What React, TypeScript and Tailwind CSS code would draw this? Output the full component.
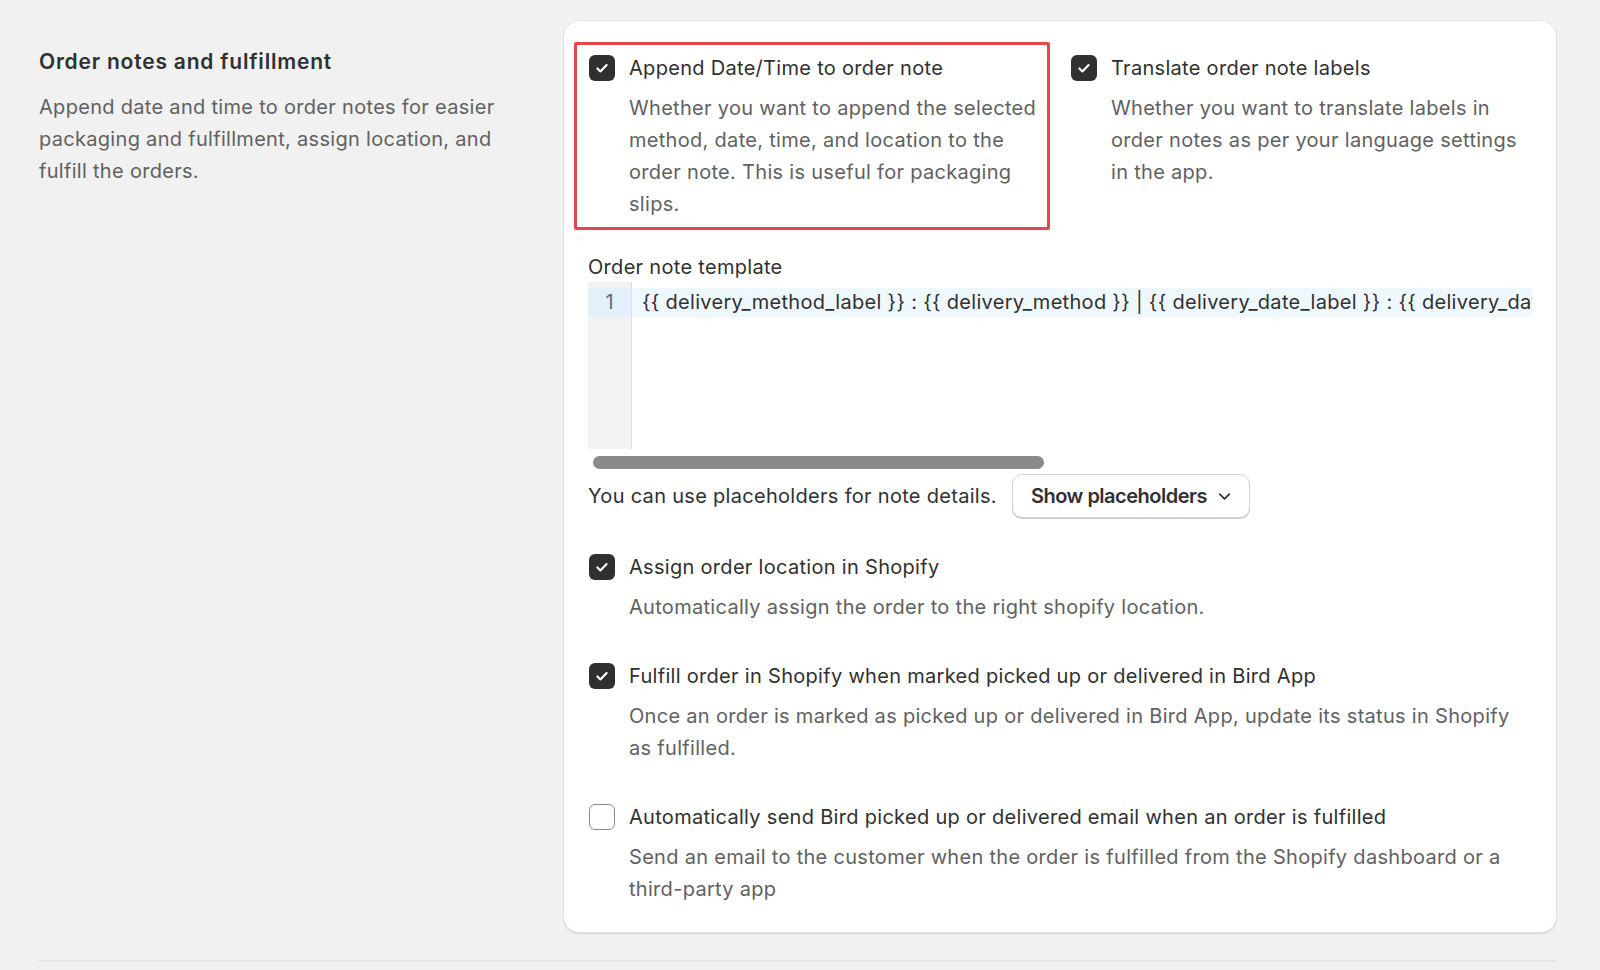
import { ChevronDown } from 'lucide-react';

type Opt = {
    label: string;
    desc: string;
    checked: boolean;
};

const options: Opt[] = [
    {
        label: 'Assign order location in Shopify',
        desc: 'Automatically assign the order to the right shopify location.',
        checked: true,
    },
    {
        label: 'Fulfill order in Shopify when marked picked up or delivered in Bird App',
        desc: 'Once an order is marked as picked up or delivered in Bird App, update its status in Shopify as fulfilled.',
        checked: true,
    },
    {
        label: 'Automatically send Bird picked up or delivered email when an order is fulfilled',
        desc: 'Send an email to the customer when the order is fulfilled from the Shopify dashboard or a third-party app',
        checked: false,
    },
];

function Checkbox({ checked }: { checked: boolean }) {
    if (!checked) {
        return (
            <span className="mt-[3px] ml-px w-[26px] h-[26px] shrink-0 rounded-[6px] border-[1.5px] border-[#8a8a8a] bg-white" />
        );
    }
    return (
        <span className="mt-[3px] ml-px w-[26px] h-[26px] shrink-0 rounded-[6px] bg-[#303030] flex items-center justify-center">
            <svg width="16" height="16" viewBox="0 0 14 14" fill="none">
                <path d="M3 7.4l2.6 2.6L11 4.4" stroke="#fff" strokeWidth="1.9" strokeLinecap="round" strokeLinejoin="round" />
            </svg>
        </span>
    );
}

function CheckItem({ label, desc, checked }: Opt) {
    return (
        <div className="flex items-start gap-[14px]">
            <Checkbox checked={checked} />
            <div className="min-w-0">
                <div className="leading-[32px] text-[#303030]">{label}</div>
                <p className="mt-2 leading-[32px] text-[#616161]">{desc}</p>
            </div>
        </div>
    );
}

export default function App() {
    const code =
        '{{ delivery_method_label }} : {{ delivery_method }} | {{ delivery_date_label }} : {{ delivery_date }} | {{ delivery_time_label }} : {{ delivery_time }}';

    return (
        <div className="min-h-screen bg-[#f1f1f1] pl-[39px] pr-[43px] pt-[20px] font-['Inter',sans-serif] text-[20px] tracking-[0.3px] text-[#303030]">
            <div className="flex gap-6">
                {/* left side */}
                <div className="w-[500px] shrink-0 pt-[28px] pr-[30px]">
                    <h2 className="text-[21px] leading-[28px] font-semibold tracking-[0.8px] text-[#303030]">Order notes and fulfillment</h2>
                    <p className="mt-[15px] leading-[32px] text-[#616161]">
                        Append date and time to order notes for easier packaging and fulfillment, assign location, and fulfill the orders.
                    </p>
                </div>

                {/* card */}
                <div className="flex-1 min-w-0 bg-white rounded-[16px] border border-[#e3e3e3] shadow-[0_1px_1px_rgba(0,0,0,0.12)] px-6 pt-[31px] pb-[27px]">
                    <div className="grid grid-cols-2 gap-5">
                        <div className="relative">
                            <span className="pointer-events-none absolute -top-[10px] -left-[14px] right-0 -bottom-[10px] border-[3px] border-[#e2474f] rounded-[2px]" />
                            <CheckItem
                                label="Append Date/Time to order note"
                                desc="Whether you want to append the selected method, date, time, and location to the order note. This is useful for packaging slips."
                                checked
                            />
                        </div>
                        <CheckItem
                            label="Translate order note labels"
                            desc="Whether you want to translate labels in order notes as per your language settings in the app."
                            checked
                        />
                    </div>

                    <div className="mt-[32px] leading-[30px] text-[#303030]">Order note template</div>
                    <div className="h-[167px] flex overflow-hidden">
                        <div className="w-[44px] shrink-0 bg-[#f3f3f3] border-r border-[#dddddd] pt-[6px]">
                            <div className="h-[29px] bg-[#e4effc] text-[#6b6b6b] text-right pr-[17px] leading-[29px]">1</div>
                        </div>
                        <div className="flex-1 min-w-0 pt-[6px]">
                            <div className="h-[29px] bg-[#f0f8ff] pl-[10px] leading-[29px] whitespace-nowrap overflow-hidden text-[#303030]">
                                {code}
                            </div>
                        </div>
                    </div>
                    <div className="mt-[7px] ml-[5px] w-[451px] h-[13px] rounded-full bg-[#8a8a8a]" />

                    <div className="mt-[5px] flex items-center">
                        <span className="text-[#303030]">You can use placeholders for note details.</span>
                        <button className="ml-[15px] h-[44px] pl-[18px] pr-[15px] flex items-center gap-[8px] rounded-[10px] border border-[#d4d4d4] bg-white shadow-[0_1px_0_#c9c9c9] font-semibold tracking-[-0.5px] text-[#303030]">
                            Show placeholders
                            <ChevronDown size={19} strokeWidth={2.2} />
                        </button>
                    </div>

                    <div className="mt-[33px] flex flex-col gap-[37px]">
                        {options.map((o) => (
                            <CheckItem key={o.label} {...o} />
                        ))}
                    </div>
                </div>
            </div>

            <div className="mt-[27px] h-[2px] bg-[#e6e6e6]" />
        </div>
    );
}
